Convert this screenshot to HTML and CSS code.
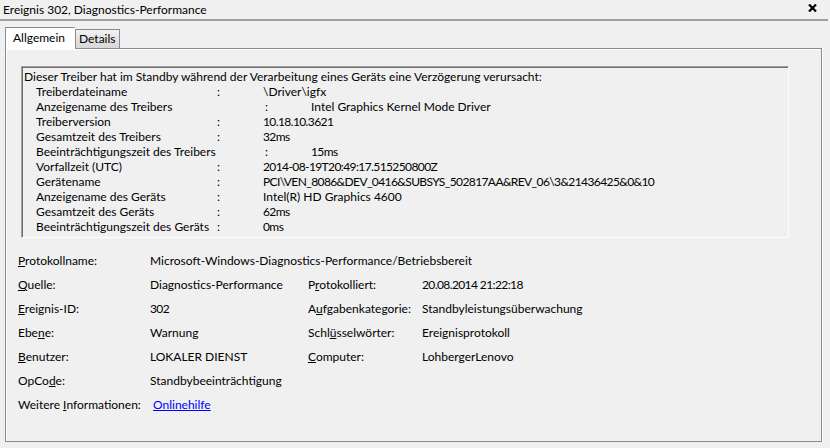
FILE: index.html
```html
<!DOCTYPE html>
<html lang="de">
<head>
    <meta charset="UTF-8">
    <title>Ereignis 302, Diagnostics-Performance</title>
    <link rel="stylesheet" href="styles.css">
</head>
<body>

    <div class="titlebar">
        <span class="title">Ereignis 302, Diagnostics-Performance</span>
        <svg class="close" width="9" height="8" viewBox="0 0 9 8">
            <path d="M1 0.5 L8 7.5 M8 0.5 L1 7.5" stroke="#000" stroke-width="2.2"/>
        </svg>
    </div>

    <div class="tabs">
        <div class="tab active">Allgemein</div>
        <div class="tab">Details</div>
    </div>

    <div class="panel">
        <div class="description">
            <div class="line">Dieser Treiber hat im Standby während der Verarbeitung eines Geräts eine Verzögerung verursacht:</div>
            <div class="line row"><span class="k">Treiberdateiname</span><span class="c">:</span><span>\Driver\igfx</span></div>
            <div class="line row wide"><span class="k">Anzeigename des Treibers</span><span class="c">:</span><span>Intel Graphics Kernel Mode Driver</span></div>
            <div class="line row"><span class="k">Treiberversion</span><span class="c">:</span><span class="num">10.18.10.3621</span></div>
            <div class="line row"><span class="k">Gesamtzeit des Treibers</span><span class="c">:</span><span class="num">32ms</span></div>
            <div class="line row wide"><span class="k">Beeinträchtigungszeit des Treibers</span><span class="c">:</span><span class="num">15ms</span></div>
            <div class="line row"><span class="k">Vorfallzeit (UTC)</span><span class="c">:</span><span class="num">2014-08-19T20:49:17.515250800Z</span></div>
            <div class="line row"><span class="k">Gerätename</span><span class="c">:</span><span class="num">PCI\VEN_8086&amp;DEV_0416&amp;SUBSYS_502817AA&amp;REV_06\3&amp;21436425&amp;0&amp;10</span></div>
            <div class="line row"><span class="k">Anzeigename des Geräts</span><span class="c">:</span><span>Intel(R) HD Graphics 4600</span></div>
            <div class="line row"><span class="k">Gesamtzeit des Geräts</span><span class="c">:</span><span class="num">62ms</span></div>
            <div class="line row"><span class="k">Beeinträchtigungszeit des Geräts</span><span class="c">:</span><span class="num">0ms</span></div>
        </div>

        <div class="fields">
            <span><u>P</u>rotokollname:</span>
            <span class="span3">Microsoft-Windows-Diagnostics-Performance/Betriebsbereit</span>

            <span><u>Q</u>uelle:</span>
            <span>Diagnostics-Performance</span>
            <span>P<u>r</u>otokolliert:</span>
            <span class="num">20.08.2014 21:22:18</span>

            <span><u>E</u>reignis-ID:</span>
            <span class="num">302</span>
            <span>A<u>u</u>fgabenkategorie:</span>
            <span>Standbyleistungsüberwachung</span>

            <span>Ebe<u>n</u>e:</span>
            <span>Warnung</span>
            <span>Schl<u>ü</u>sselwörter:</span>
            <span>Ereignisprotokoll</span>

            <span><u>B</u>enutzer:</span>
            <span>LOKALER DIENST</span>
            <span><u>C</u>omputer:</span>
            <span>LohbergerLenovo</span>

            <span>OpCo<u>d</u>e:</span>
            <span class="span3">Standbybeeinträchtigung</span>

            <span>Weitere <u>I</u>nformationen:</span>
            <span class="span3"><a class="link" href="#">Onlinehilfe</a></span>
        </div>
    </div>

</body>
</html>
```

FILE: styles.css
```css
* {
    box-sizing: border-box;
}
body {
    margin: 0;
    width: 830px;
    height: 448px;
    overflow: hidden;
    background: #f0f0f0;
    color: #000;
    font-family: Lato, "Liberation Sans", sans-serif;
    font-size: 12px;
}
.titlebar {
    height: 21px;
    width: 828px;
    border-bottom: 2px solid #a0a0a0;
    display: flex;
    align-items: flex-start;
    justify-content: space-between;
    padding: 2px 11px 0 3px;
    line-height: 15px;
}
.close {
    margin-top: 2px;
}
.tabs {
    display: flex;
    align-items: flex-end;
    margin: 6px 0 0 5px;
    height: 21px;
}
.tab {
    border: 1px solid #898c95;
    border-bottom: none;
    line-height: 18px;
    padding: 0 3px;
    height: 19px;
    background: linear-gradient(#f3f3f3, #e2e2e2 50%, #d8d8d8);
}
.tab.active {
    height: 22px;
    margin-bottom: -1px;
    position: relative;
    width: 70px;
    padding: 2px 0 0 7px;
    background: #fff;
    border-right: none;
    line-height: 16px;
}
.panel {
    margin-left: 5px;
    width: 817px;
    height: 394px;
    border: 1px solid #898c95;
    box-shadow: inset 1px 1px 0 #fff, 1px 0 0 #fff;
    padding: 17px 0 0 15px;
}
.description {
    width: 768px;
    height: 172px;
    border: 1px solid;
    border-color: #a0a0a0 #fdfdfd #fdfdfd #a0a0a0;
    box-shadow: inset 1px 1px 0 #6d6d6d;
    padding: 2px 0 0 2px;
}
.line {
    line-height: 15px;
    height: 15px;
    white-space: nowrap;
}
.row {
    display: flex;
    padding-left: 12px;
}
.row .k {
    width: 181px;
}
.row .c {
    width: 46px;
}
.row.wide .k {
    width: 229px;
}
.num {
    letter-spacing: -0.6px;
}
.fields {
    display: grid;
    grid-template-columns: 132px 158px 114px auto;
    grid-auto-rows: 24px;
    line-height: 24px;
    margin: 11px 0 0 -3px;
    white-space: nowrap;
}
.span3 {
    grid-column: 2 / 5;
}
.link {
    color: #0000ff;
    margin-left: 3px;
}
```
